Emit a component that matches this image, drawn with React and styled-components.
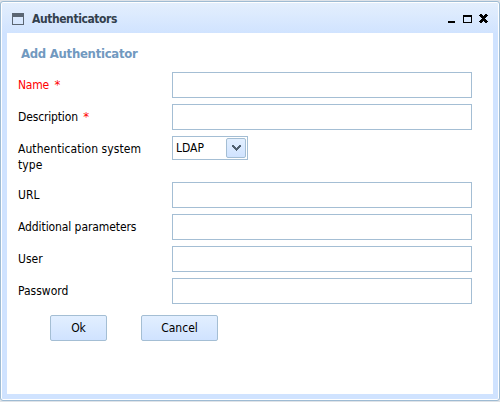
import React from "react";
import styled, { createGlobalStyle } from "styled-components";

const Global = createGlobalStyle`
  * { box-sizing: border-box; }
  body { margin: 0; padding-top: 1px; background: #dfe3e8; font: 12px/16px "DejaVu Sans Condensed", "Noto Sans", sans-serif; color: #000; }
`;
const Window = styled.main`
  width: 500px; height: 400px; padding: 0 6px 6px;
  border: 1px solid #9ebbd3; border-radius: 3px;
  box-shadow: inset 0 0 0 1px #fff;
  background: linear-gradient(#e4effd 0, #d0e3ff 32px);
`;
const TitleBar = styled.header`
  height: 31px; display: flex; align-items: center; padding: 3px 5px 0 5px;
`;
const Title = styled.h1`
  flex: 1; margin: 0 0 0 8px; font: bold 12px/16px "DejaVu Sans Condensed", sans-serif; color: #33404d;
  letter-spacing: -0.42px;
`;
const Controls = styled.div`display: flex; gap: 7px; align-items: center; padding-bottom: 1px;`;
const Panel = styled.section`height: 361px; background: #fff; padding: 11px 14px 0 11px;`;
const Heading = styled.h2`
  margin: 0 0 8px 3px; font: bold 13px/20px "DejaVu Sans Condensed", sans-serif; color: #7199bf;
  letter-spacing: -0.28px;
`;
const Row = styled.div`
  display: grid; grid-template-columns: 154px 300px; align-items: start;
  height: ${p => p.$height || 32}px;
`;
const Label = styled.label`
  padding-top: 5px; color: ${p => (p.$error ? "#f00" : "#000")};
  letter-spacing: ${p => p.$tracking || 0}px; white-space: pre-line;
`;
const Star = styled.span`color: #f00; margin-left: 5.5px; font-size: 13px; line-height: 1;`;
const Field = styled.input`
  width: 300px; height: 26px; border: 1px solid #a4bed4; background: #fff; outline: 0; padding: 0 4px;
`;
const Select = styled.div`
  width: 76px; height: 24px; border: 1px solid #a4bed4; display: flex; align-items: center;
  justify-content: space-between; padding: 0 1px 0 3px;
`;
const DropButton = styled.button`
  width: 20px; height: 20px; padding: 0; border: 1px solid #a4bed4; border-radius: 2px;
  background: linear-gradient(#e2efff, #d0e3ff); display: grid; place-items: center;
`;
const Actions = styled.div`display: flex; gap: 34px; padding: 5px 0 0 32px;`;
const Button = styled.button`
  width: ${p => p.$width}px; height: 26px; padding: 0; border: 1px solid #a4bed4; border-radius: 2px;
  background: linear-gradient(#e2efff, #d0e3ff); font: inherit; color: #000;
`;
const fields = [
  { label: "Name", required: true, error: true, tracking: -0.2 },
  { label: "Description", required: true, tracking: -0.15 },
  { label: "Authentication system\ntype", select: "LDAP", height: 46, tracking: 0.06 },
  { label: "URL" },
  { label: "Additional parameters", tracking: -0.09 },
  { label: "User" },
  { label: "Password" },
];

export default function App() {
  return (
    <>
      <Global />
      <Window>
        <TitleBar>
          <svg width="12" height="12" shapeRendering="crispEdges"><path fill="#5b6673" d="M0 0h12v12H0zM1 4v7h10V4z" fillRule="evenodd" /></svg>
          <Title>Authenticators</Title>
          <Controls>
            <svg width="8" height="10" shapeRendering="crispEdges"><path d="M0 7h7v2H0z" /></svg>
            <svg width="9" height="8" shapeRendering="crispEdges"><path fillRule="evenodd" d="M0 0h9v8H0zM1 2v5h7V2z" /></svg>
            <svg width="9" height="9" shapeRendering="crispEdges"><path d="M1 0h2v1h1v1h1V1h1V0h2v1h1v1H8v1H7v1H6v1h1v1h1v1h1v1H8v1H6V8H5V7H4v1H3v1H1V8H0V7h1V6h1V5h1V4H2V3H1V2H0V1h1z" /></svg>
          </Controls>
        </TitleBar>
        <Panel>
          <Heading>Add Authenticator</Heading>
          {fields.map(f => (
            <Row key={f.label} $height={f.height}>
              <Label $error={f.error} $tracking={f.tracking}>{f.label}{f.required && <Star>*</Star>}</Label>
              {f.select ? (
                <Select>
                  {f.select}
                  <DropButton aria-label="Open">
                    <svg width="9" height="6" shapeRendering="crispEdges"><path fill="#50606f" d="M0 0h2v1h1v1h1v1h1V2h1V1h1V0h2v2H8v1H7v1H6v1H5v1H4V5H3V4H2V3H1V2H0z" /></svg>
                  </DropButton>
                </Select>
              ) : <Field aria-label={f.label} />}
            </Row>
          ))}
          <Actions><Button $width={57}>Ok</Button><Button $width={77}>Cancel</Button></Actions>
        </Panel>
      </Window>
    </>
  );
}
